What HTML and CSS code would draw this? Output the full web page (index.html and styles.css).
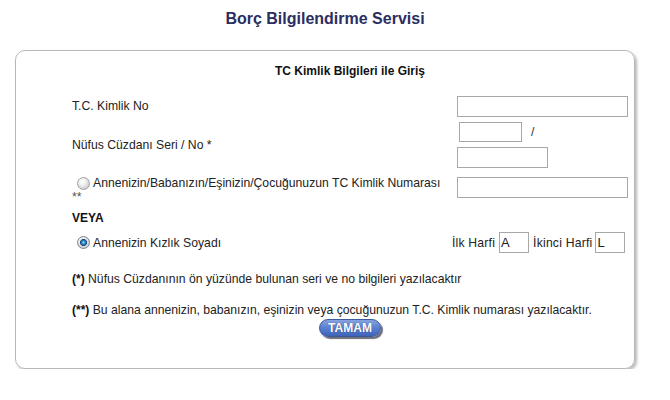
FILE: index.html
```html
<!DOCTYPE html>
<html lang="tr">
<head>
<meta charset="utf-8">
<title>Borç Bilgilendirme Servisi</title>
<link rel="stylesheet" href="styles.css">
</head>
<body>
<div class="page">
  <h1 class="title">Borç Bilgilendirme Servisi</h1>
  <div class="box">
    <div class="inner">
      <div class="heading">TC Kimlik Bilgileri ile Giriş</div>

      <div class="row row-1">
        <div class="label">T.C. Kimlik No</div>
        <div class="field"><input class="inp inp-full" type="text"></div>
      </div>

      <div class="row row-2">
        <div class="label">Nüfus Cüzdanı Seri / No *</div>
        <div class="field field-stack">
          <div class="seri-line"><input class="inp inp-seri" type="text"><span class="slash">/</span></div>
          <input class="inp inp-no" type="text">
        </div>
      </div>

      <div class="row row-3">
        <div class="label label-multi">
          <label class="radio-line"><input class="radio" type="radio" name="sec"><span>Annenizin/Babanızın/Eşinizin/Çocuğunuzun TC Kimlik Numarası</span></label>
          <div class="stars">**</div>
        </div>
        <div class="field"><input class="inp inp-full" type="text"></div>
      </div>

      <div class="veya">VEYA</div>

      <div class="row row-5">
        <div class="label">
          <label class="radio-line"><input class="radio" type="radio" name="sec" checked><span>Annenizin Kızlık Soyadı</span></label>
        </div>
        <div class="field field-harf">
          <span class="harf-label">İlk Harfi</span><input class="inp inp-harf" type="text" value="A">
          <span class="harf-label harf-2">İkinci Harfi</span><input class="inp inp-harf" type="text" value="L">
        </div>
      </div>

      <p class="note note-1"><b>(*)</b> Nüfus Cüzdanının ön yüzünde bulunan seri ve no bilgileri yazılacaktır</p>
      <p class="note note-2"><b>(**)</b> Bu alana annenizin, babanızın, eşinizin veya çocuğunuzun T.C. Kimlik numarası yazılacaktır.</p>

      <div class="actions"><button class="btn" type="button">TAMAM</button></div>
    </div>
  </div>
</div>
</body>
</html>
```
FILE: styles.css
```css
* { box-sizing: border-box; }
html, body { margin: 0; padding: 0; background: #fff; }
body {
  font-family: "Liberation Sans", Arial, sans-serif;
  font-size: 12.2px;
  color: #222;
}
.page { width: 650px; padding-top: 9px; }
.title {
  margin: 0;
  text-align: center;
  font-size: 16px;
  line-height: 20px;
  font-weight: bold;
  color: #2b2e62;
}
.box {
  margin: 21px 0 0 15px;
  width: 620px;
  height: 319px;
  border: 1px solid #b8b8b8;
  border-radius: 10px;
  box-shadow: 2px 2px 3px rgba(0,0,0,0.28);
  padding: 13px 0 0 56px;
}
.inner { width: 556px; }
.heading {
  text-align: center;
  font-weight: bold;
  font-size: 12px;
  line-height: 14px;
  color: #111;
}
.row {
  display: grid;
  grid-template-columns: 385px 171px;
  align-items: center;
}
.row-1 { margin-top: 18px; }
.row-1 .label { margin-top: -2px; }
.row-2 { margin-top: 5px; }
.row-3 { margin-top: 9px; align-items: start; }
.row-5 { margin-top: 7px; }
.label { line-height: 14px; }
.inp {
  display: block;
  height: 21px;
  border: 1px solid #a8a8a8;
  background: #fff;
  margin: 0;
  padding: 0 2px;
  font-family: "Liberation Sans", Arial, sans-serif;
  font-size: 13px;
  color: #222;
  outline: none;
  border-radius: 0;
}
.inp-full { width: 171px; }
.field-stack { display: flex; flex-direction: column; gap: 5px; }
.seri-line { display: flex; align-items: center; }
.inp-seri { width: 63px; height: 20px; margin-left: 2px; }
.slash { margin-left: 9px; color: #333; }
.inp-no { width: 91px; }
.label-multi { margin-top: -1px; }
.radio-line { display: flex; align-items: center; gap: 3px; margin-left: 5px; }
.radio {
  appearance: none;
  -webkit-appearance: none;
  width: 13px;
  height: 13px;
  margin: 0;
  border-radius: 50%;
  border: 1px solid #a0a0a0;
  background: radial-gradient(circle at 40% 35%, #ffffff 0, #f2f2f2 3px, #d0d0d0 7px);
  flex: none;
}
.radio:checked {
  border-color: #7a8590;
  background:
    radial-gradient(circle at 50% 50%, #9fdcf5 0, #3a8ccc 1.5px, #174a80 3.2px, rgba(23,74,128,0) 3.8px),
    radial-gradient(circle at 40% 35%, #ffffff 0, #eeeeee 3px, #cfcfcf 7px);
}
.stars { color: #555; line-height: 14px; }
.veya { margin-top: 7px; font-weight: bold; font-size: 12px; line-height: 14px; color: #111; }
.field-harf { display: flex; align-items: center; margin-left: -5px; }
.harf-label { color: #222; margin-right: 4px; letter-spacing: 0.2px; }
.harf-2 { margin-left: 4px; margin-right: 3px; }
.inp-harf { width: 30px; padding: 0 1px; }
.note { margin: 0; line-height: 14px; color: #222; }
.note-1 { margin-top: 19px; }
.note-2 { margin-top: 17px; }
.note b { color: #111; font-size: 12px; }
.actions { display: flex; justify-content: center; margin-top: 2px; }
.btn {
  width: 62px;
  height: 18px;
  padding: 0;
  border: 1px solid #3a5a9a;
  border-radius: 9px;
  background: linear-gradient(#88a3e0, #5a7fd0 50%, #3f63b8);
  box-shadow: 2px 2px 1px rgba(30,30,50,0.65);
  color: #fff;
  font-family: "Liberation Sans", Arial, sans-serif;
  font-size: 12px;
  font-weight: bold;
  line-height: 16px;
  text-shadow: 0 0 1px rgba(20,40,90,0.7);
  cursor: pointer;
}
```
